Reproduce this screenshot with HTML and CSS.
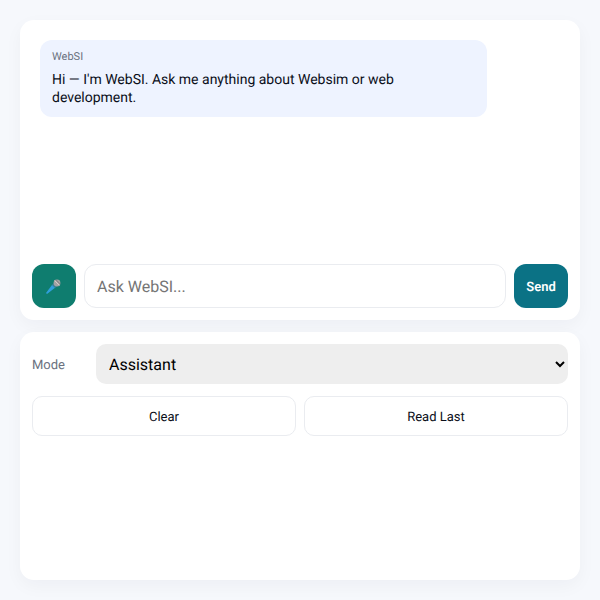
FILE: index.html
```html
<!DOCTYPE html>
<html lang="en">
<head>
<meta charset="utf-8">
<title>WebSI</title>
<link rel="stylesheet" href="styles.css">
</head>
<body>
<main class="app">
  <section class="card chat">
    <div class="messages">
      <div class="bubble">
        <div class="who">WebSI</div>
        <div class="text">Hi — I'm WebSI. Ask me anything about Websim or web development.</div>
      </div>
    </div>
    <form class="composer">
      <button type="button" class="mic" aria-label="Voice input">
        <svg class="mic-icon" viewBox="0 0 18 18" width="18" height="18" aria-hidden="true">
          <path d="M2 17 L1 16 L7.4 7.6 L10.4 10.6 Z" fill="#2f9fdc"/>
          <path d="M7 8 L10 4.6 L13.4 8 L10 11 Z" fill="#3d7f95"/>
          <circle cx="12" cy="6" r="3.4" fill="#a3a3a3"/>
          <path d="M9.6 3.6 L14.4 8.4" stroke="#d9c7c7" stroke-width="1"/>
          <path d="M11 2.8 L15.2 7" stroke="#6f6f6f" stroke-width="0.7"/>
        </svg>
      </button>
      <input class="ask" type="text" placeholder="Ask WebSI...">
      <button type="button" class="send">Send</button>
    </form>
  </section>
  <section class="card panel">
    <div class="mode-row">
      <label class="mode-label" for="mode">Mode</label>
      <select id="mode" class="mode"><option>Assistant</option></select>
    </div>
    <div class="actions">
      <button type="button" class="action">Clear</button>
      <button type="button" class="action">Read Last</button>
    </div>
  </section>
</main>
</body>
</html>
```

FILE: styles.css
```css
* { box-sizing: border-box; }
html, body { height: 100%; }
body {
  margin: 0;
  background: #f6f8fc;
  font-family: Roboto, "Noto Sans", sans-serif;
  color: #0b0f1a;
  text-rendering: geometricPrecision;
}
.app {
  height: 600px;
  padding: 20px;
  display: flex;
  flex-direction: column;
  gap: 12px;
}
.card {
  background: #fff;
  border-radius: 14px;
  padding: 12px;
  box-shadow: 0 6px 18px rgba(16, 24, 40, 0.04);
}
.chat {
  height: 300px;
  display: flex;
  flex-direction: column;
}
.messages {
  flex: 1;
  padding: 8px;
}
.bubble {
  width: 447px;
  padding: 10px 12px;
  background: #eef3ff;
  border-radius: 12px;
}
.who {
  font-size: 11px;
  line-height: 13px;
  color: #6b7280;
  margin-bottom: 8px;
}
.text {
  font-size: 14px;
  line-height: 18px;
}
.composer {
  display: flex;
  gap: 8px;
  height: 44px;
}
.mic {
  width: 44px;
  border: 0;
  border-radius: 12px;
  background: #0f7d6f;
  padding: 0;
  display: flex;
  align-items: center;
  justify-content: center;
}
.mic-icon { display: block; }
.ask {
  flex: 1;
  min-width: 0;
  border: 1px solid #eaecf0;
  border-radius: 12px;
  padding: 0 12px;
  font: 16px Roboto, sans-serif;
  text-rendering: geometricPrecision;
  background: #fff;
}
.ask::placeholder { color: #757575; }
.send {
  width: 54px;
  border: 0;
  border-radius: 12px;
  background: #0b7285;
  color: #fff;
  font: 600 13px Roboto, sans-serif;
  text-rendering: geometricPrecision;
  padding: 2px 0 0;
}
.panel {
  flex: 1;
  display: flex;
  flex-direction: column;
  gap: 12px;
}
.mode-row {
  display: flex;
  align-items: center;
  gap: 8px;
}
.mode-label {
  width: 56px;
  padding-top: 2px;
  font-size: 13px;
  color: #6b7280;
}
.mode {
  flex: 1;
  height: 40px;
  border: 0;
  border-radius: 10px;
  padding: 0 9px;
  background-color: #eeeeee;
  color: #000;
  font: 16px Roboto, sans-serif;
  text-rendering: geometricPrecision;
}
.actions {
  display: grid;
  grid-template-columns: 1fr 1fr;
  gap: 8px;
}
.action {
  height: 40px;
  padding: 2px 0 0;
  border: 1px solid #eaecf0;
  border-radius: 10px;
  background: #fff;
  color: #0b0f1a;
  font: 13px Roboto, sans-serif;
  text-rendering: geometricPrecision;
}
```
